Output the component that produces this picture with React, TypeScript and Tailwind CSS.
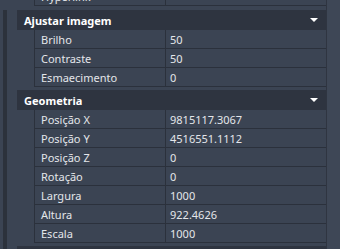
import React from "react";

type Row = [string, string];

const RowEl = ({ k, v }: { k: string; v: string }) => (
  <div className="h-[19px] shrink-0 flex border-l border-b border-[#2b313c] text-[11px] text-[#e4e6ea]">
    <div className="w-[131px] shrink-0 border-r border-[#2b313c] pl-[6px] flex items-center leading-none">{k}</div>
    <div className="flex-1 pl-[4px] flex items-center leading-none">{v}</div>
  </div>
);

const Section = ({ title, rows }: { title: string; rows: Row[] }) => (
  <div className="block mb-[3px]">
    <div className="h-[20px] bg-[#2e3440] flex items-center justify-between pl-[7px] pr-[8px]">
      <span className="text-[11px] font-bold text-white leading-none">{title}</span>
      <svg width="8" height="4" viewBox="0 0 8 4" className="mb-[1px]">
        <polygon points="0,0 8,0 4,4" fill="#ffffff" />
      </svg>
    </div>
    <div className="ml-[17px]">
      {rows.map(([k, v], i) => (
        <RowEl key={i} k={k} v={v} />
      ))}
    </div>
  </div>
);

export default function App() {
  return (
    <div
      className="w-[340px] h-[249px] overflow-hidden bg-[#3b4453] flex items-start"
      style={{ fontFamily: '"Noto Sans", "Open Sans", sans-serif' }}
    >
      <div className="w-[17px] h-full shrink-0 flex">
        <div className="ml-[3px] mt-[10px] w-[4px] h-full bg-[#2c323c]" />
      </div>
      <div className="w-[309px] shrink-0 block -mt-[13px]">
        <div className="ml-[17px] mb-[4px]">
          <RowEl k="Hyperlink" v="" />
        </div>
        <Section
          title="Ajustar imagem"
          rows={[
            ["Brilho", "50"],
            ["Contraste", "50"],
            ["Esmaecimento", "0"],
          ]}
        />
        <Section
          title="Geometria"
          rows={[
            ["Posição X", "9815117.3067"],
            ["Posição Y", "4516551.1112"],
            ["Posição Z", "0"],
            ["Rotação", "0"],
            ["Largura", "1000"],
            ["Altura", "922.4626"],
            ["Escala", "1000"],
          ]}
        />
        <div className="h-[20px] bg-[#2e3440]" />
      </div>
      <div className="flex-1 h-full border-l border-[#2f3541] bg-[#3e4756]" />
    </div>
  );
}
